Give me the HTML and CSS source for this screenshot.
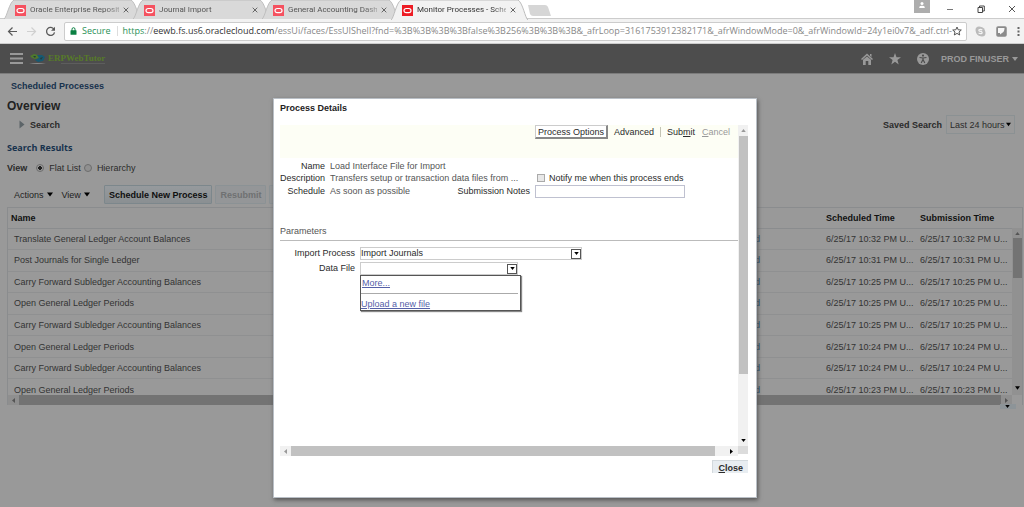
FILE: index.html
```html
<!DOCTYPE html>
<html lang="en">
<head>
<meta charset="utf-8">
<title>Monitor Processes - Scheduled Processes</title>
<link rel="stylesheet" href="styles.css">
</head>
<body>
<svg width="0" height="0" class="defs" aria-hidden="true">
  <symbol id="tabshape" viewBox="0 0 137 20" preserveAspectRatio="none"><path d="M0 20C3 18 5 3 10 0H127C132 3 134 18 137 20" stroke="#bdbdbd"/></symbol>
  <symbol id="oracle" viewBox="0 0 11 11"><rect width="11" height="11"/><rect x="2" y="3.5" width="7" height="4.2" rx="2.1" fill="none" stroke="#fff" stroke-width="1.2"/></symbol>
  <symbol id="cross" viewBox="0 0 6 6"><path d="M.7 .7L5.3 5.3M5.3 .7L.7 5.3" stroke="#666" fill="none"/></symbol>
  <symbol id="tri" viewBox="0 0 6 4"><path d="M0 0H6L3 4Z"/></symbol>
</svg>
<div class="browser">
  <nav class="tabs" aria-label="Tabs">
    <div class="tab"><svg class="shape"><use href="#tabshape"/></svg><svg class="fav"><use href="#oracle"/></svg><span class="tabname">Oracle Enterprise Reposit</span><button class="x" aria-label="Close tab"><svg><use href="#cross"/></svg></button></div>
    <div class="tab"><svg class="shape"><use href="#tabshape"/></svg><svg class="fav"><use href="#oracle"/></svg><span class="tabname">Journal Import</span><button class="x" aria-label="Close tab"><svg><use href="#cross"/></svg></button></div>
    <div class="tab"><svg class="shape"><use href="#tabshape"/></svg><svg class="fav"><use href="#oracle"/></svg><span class="tabname">General Accounting Dash</span><button class="x" aria-label="Close tab"><svg><use href="#cross"/></svg></button></div>
    <div class="tab active"><svg class="shape"><use href="#tabshape"/></svg><svg class="fav"><use href="#oracle"/></svg><span class="tabname">Monitor Processes - Sche</span><button class="x" aria-label="Close tab"><svg><use href="#cross"/></svg></button></div>
    <button class="newtab" aria-label="New tab"><svg width="24" height="11" viewBox="0 0 24 11"><path d="M1 0H18Q20 0 21 2L24 11H6Q4 11 3 9Z" fill="#d6d6d6"/></svg></button>
    <div class="window">
      <button class="user" aria-label="User"><svg width="16" height="13" viewBox="0 0 16 13"><path d="M0 0H16V13H0Z" fill="#adadad"/><circle cx="8" cy="3.6" r="1.5" fill="#fff"/><path d="M5.3 8V7Q5.3 5.7 8 5.7T10.700 7V8Z" fill="#fff"/></svg></button>
      <button aria-label="Minimise"><svg width="8" height="8" viewBox="0 0 8 8"><path d="M1 4.500H7" stroke="#777"/></svg></button>
      <button aria-label="Restore"><svg width="8" height="8" viewBox="0 0 8 8"><path d="M1 2.500H5.500V7.500H1ZM2.500 2V1H7.300V6H6" fill="none" stroke="#444"/></svg></button>
      <button aria-label="Close"><svg width="8" height="8" viewBox="0 0 8 8"><path d="M1 1L7 7M7 1L1 7" stroke="#555"/></svg></button>
    </div>
  </nav>
  <div class="toolbar">
    <button aria-label="Back"><svg width="11" height="11" viewBox="0 0 11 11"><path d="M10 5.500H1.500M5.500 1.500L1.500 5.500L5.500 9.500" fill="none" stroke="#5a5a5a" stroke-width="1.200"/></svg></button>
    <button aria-label="Forward"><svg width="11" height="11" viewBox="0 0 11 11"><path d="M1 5.500H9.500M5.500 1.500L9.500 5.500L5.500 9.500" fill="none" stroke="#d0d0d0" stroke-width="1.200"/></svg></button>
    <button aria-label="Reload"><svg width="11" height="11" viewBox="0 0 11 11"><path d="M9 3.300A4 4 0 1 0 9.500 6.300" fill="none" stroke="#5a5a5a" stroke-width="1.300"/><path d="M10 .8V4.800H6Z" fill="#5a5a5a"/></svg></button>
    <div class="address">
      <svg width="7" height="8" viewBox="0 0 7 8"><rect x=".5" y="3.300" width="6" height="4.400" rx=".5" fill="#0b8043"/><path d="M2 4V2.200A1.500 1.500 0 0 1 5 2.200V4" fill="none" stroke="#0b8043"/></svg>
      <span class="secure">Secure</span>
      <span class="url"><span class="scheme">https</span>://<span class="host">eewb.fs.us6.oraclecloud.com</span>/essUi/faces/EssUIShell?fnd=%3B%3B%3B%3Bfalse%3B256%3B%3B%3B&amp;_afrLoop=3161753912382171&amp;_afrWindowMode=0&amp;_afrWindowId=24y1ei0v7&amp;_adf.ctrl-</span>
      <button aria-label="Bookmark"><svg width="10" height="10" viewBox="0 0 10 10"><path d="M5 1L6.200 3.800L9.300 4L7 6L7.700 9L5 7.400L2.300 9L3 6L.7 4L3.800 3.800Z" fill="none" stroke="#555"/></svg></button>
    </div>
    <div class="extensions">
      <button aria-label="Skype"><svg width="11" height="11" viewBox="0 0 11 11"><circle cx="4" cy="4" r="3.500" fill="#bbb"/><circle cx="7" cy="7" r="3.500" fill="#bbb"/><circle cx="5.500" cy="5.500" r="4.500" fill="#bbb"/><path d="M7.300 3.900Q5.500 2.700 4 3.800Q3.400 5.200 5.500 5.400Q7.700 5.800 7 7.200Q5.500 8.300 3.600 7" fill="none" stroke="#f5f5f5" stroke-width="1.200"/></svg></button>
      <button aria-label="Extension"><svg width="11" height="11" viewBox="0 0 11 11"><rect x="1" y="1" width="9" height="9" rx="1" fill="#8b8b8b" stroke="#8b8b8b" stroke-width="1.500"/><path d="M2 2H8.500Q8.500 6 6 7L4 8.500V7H2Z" fill="#f6f6f6"/></svg></button>
      <button aria-label="Menu"><svg width="3" height="11" viewBox="0 0 3 11"><path d="M.5 1h2v2h-2zM.5 4.500h2v2h-2zM.5 8h2v2h-2z" fill="#666"/></svg></button>
    </div>
  </div>

  <div class="app">
    <header class="appbar">
      <button aria-label="Navigator"><svg width="13" height="11" viewBox="0 0 13 11"><path d="M0 1H13M0 5.500H13M0 10H13" stroke="#999" stroke-width="2"/></svg></button>
      <a class="logo" href="#"><svg width="17" height="12" viewBox="0 0 17 12"><path d="M1 3L5 1L9 2L10 5L6 6L3 5Z" fill="#4f7a2c"/><path d="M8 2L13 2L16 4L14 8L9 9L6 7L10 5Z" fill="#165a73"/><path d="M4 3L7 3L6 5ZM11 5L14 4L12 7Z" fill="#263d3c"/><path d="M0 11Q8 8.800 17 11Z" fill="#8b8b8b"/></svg><span class="brand"><span>ERPWebTutor</span><span class="tagline"></span></span></a>
      <div class="globals">
        <button aria-label="Home"><svg width="12" height="12" viewBox="0 0 12 12"><path d="M0 6L6 .5L12 6L11 7L6 2.500L1 7Z"/><path d="M2 6.800L6 3.500L10 6.800V12H7.300V8H4.700V12H2Z"/><path d="M9 1H10.500V4L9 2.800Z"/></svg></button>
        <button aria-label="Favorites"><svg width="12" height="12" viewBox="0 0 12 12"><path d="M6 0L7.500 4.300H12L8.400 7L9.700 11.500L6 8.800L2.300 11.500L3.600 7L0 4.300H4.500Z"/></svg></button>
        <button aria-label="Accessibility"><svg width="12" height="12" viewBox="0 0 12 12"><circle cx="6" cy="6" r="6"/><circle cx="6" cy="2.600" r="1.100" fill="#4d4d4d"/><path d="M2.500 4.500L6 5L9.500 4.500M6 5V7M6 6.500L4.200 10M6 6.500L7.800 10" stroke="#4d4d4d" stroke-width="1.200" fill="none"/></svg></button>
        <button class="account">PROD FINUSER <svg width="6" height="4"><use href="#tri"/></svg></button>
      </div>
    </header>

    <main class="page">
      <a class="crumb" href="#">Scheduled Processes</a>
      <h1>Overview</h1>
      <div class="searchrow">
        <button class="disclose"><svg width="6" height="9" viewBox="0 0 6 9"><path d="M.5 .5L5.500 4.500L.5 8.500Z" fill="#5c6468"/></svg>Search</button>
        <label class="saved">Saved Search
          <span class="savedbox"><select><option>Last 24 hours</option></select><svg width="5" height="5"><use href="#tri"/></svg></span>
        </label>
      </div>
      <h2>Search Results</h2>
      <div class="viewrow"><b>View</b>
        <label><input type="radio" name="view" checked>Flat List</label>
        <label><input type="radio" name="view">Hierarchy</label>
      </div>
      <div class="actions">
        <button class="menu">Actions <svg width="6" height="5"><use href="#tri"/></svg></button>
        <button class="menu">View <svg width="6" height="5"><use href="#tri"/></svg></button>
        <button class="btn primary">Schedule New Process</button>
        <button class="btn" disabled>Resubmit</button>
        <button class="btn blank" aria-label="Put on Hold" disabled></button>
      </div>
      <div class="grid">
        <div class="rows">
          <table>
            <colgroup><col><col class="c-status"><col class="c-time"><col class="c-time"></colgroup>
            <thead><tr><th>Name</th><th>Status</th><th>Scheduled Time</th><th>Submission Time</th></tr></thead>
            <tbody>
              <tr><td>Translate General Ledger Account Balances</td><td><a href="#">Succeeded</a></td><td>6/25/17 10:32 PM U...</td><td>6/25/17 10:32 PM U...</td></tr>
              <tr><td>Post Journals for Single Ledger</td><td><a href="#">Succeeded</a></td><td>6/25/17 10:31 PM U...</td><td>6/25/17 10:31 PM U...</td></tr>
              <tr><td>Carry Forward Subledger Accounting Balances</td><td><a href="#">Succeeded</a></td><td>6/25/17 10:25 PM U...</td><td>6/25/17 10:25 PM U...</td></tr>
              <tr><td>Open General Ledger Periods</td><td><a href="#">Succeeded</a></td><td>6/25/17 10:25 PM U...</td><td>6/25/17 10:25 PM U...</td></tr>
              <tr><td>Carry Forward Subledger Accounting Balances</td><td><a href="#">Succeeded</a></td><td>6/25/17 10:25 PM U...</td><td>6/25/17 10:25 PM U...</td></tr>
              <tr><td>Open General Ledger Periods</td><td><a href="#">Succeeded</a></td><td>6/25/17 10:24 PM U...</td><td>6/25/17 10:24 PM U...</td></tr>
              <tr><td>Carry Forward Subledger Accounting Balances</td><td><a href="#">Succeeded</a></td><td>6/25/17 10:24 PM U...</td><td>6/25/17 10:24 PM U...</td></tr>
              <tr><td>Open General Ledger Periods</td><td><a href="#">Succeeded</a></td><td>6/25/17 10:23 PM U...</td><td>6/25/17 10:23 PM U...</td></tr>
            </tbody>
          </table>
        </div>
        <div class="vscroll"><svg width="5" height="3" class="up"><use href="#tri"/></svg><span class="thumb"></span><svg width="5" height="4"><use href="#tri"/></svg></div>
        <div class="hscroll"><svg width="3" height="5" viewBox="0 0 3 5"><path d="M3 0V5L0 2.500Z"/></svg><span class="thumb"></span><svg width="3" height="5" viewBox="0 0 3 5"><path d="M0 0V5L3 2.500Z"/></svg></div>
        <button class="more" aria-label="More"><svg width="5" height="3"><use href="#tri"/></svg></button>
      </div>
    </main>
  </div>
</div>

<div class="overlay">
  <section class="dialog" role="dialog" aria-labelledby="dlgtitle">
    <h3 id="dlgtitle">Process Details</h3>
    <div class="panel">
      <div class="body">
        <div class="bar">
          <button class="options">Process Options</button>
          <button>Advanced</button>
          <span class="sep"></span>
          <button>Sub<u>m</u>it</button>
          <button disabled><u>C</u>ancel</button>
        </div>
        <div class="details">
          <span class="key">Name</span><span class="value wide">Load Interface File for Import</span>
          <span class="key">Description</span><span class="value">Transfers setup or transaction data files from ...</span>
          <label class="notify"><input type="checkbox">Notify me when this process ends</label>
          <span class="key">Schedule</span><span class="value">As soon as possible</span>
          <label for="notes">Submission Notes</label><input id="notes" type="text">
        </div>
        <h4>Parameters</h4>
        <div class="params">
          <label for="imp">Import Process</label>
          <div class="combo long"><select id="imp"><option>Import Journals</option></select><span class="arrow"><svg width="5" height="3"><use href="#tri"/></svg></span></div>
          <label for="file">Data File</label>
          <div class="combo"><select id="file"><option></option></select><span class="arrow"><svg width="5" height="3"><use href="#tri"/></svg></span>
            <div class="popup"><a class="moreitem" href="#">More...</a><a class="upload" href="#">Upload a new file</a></div>
          </div>
        </div>
      </div>
      <div class="vscroll"><svg width="5" height="3" class="up"><use href="#tri"/></svg><span class="thumb"></span><svg width="5" height="3"><use href="#tri"/></svg></div>
      <div class="hscroll"><svg width="3" height="5" viewBox="0 0 3 5"><path d="M3 0V5L0 2.500Z" fill="#999"/></svg><span class="thumb"></span><svg width="3" height="5" viewBox="0 0 3 5"><path d="M0 0V5L3 2.500Z"/></svg></div>
      <span class="corner"></span>
    </div>
    <div class="foot"><button><u>C</u>lose</button></div>
  </section>
</div>
</body>
</html>
```
FILE: styles.css
```css
* { box-sizing: border-box; }
body {
  margin: 0;
  background: #999;
  color: #2b2b2b;
  font: 9px/12px "Liberation Sans", Arial, sans-serif;
}
button, input, select { font: inherit; color: inherit; margin: 0; }
button { padding: 0; border: 0; background: none; white-space: nowrap; }
svg { display: block; flex: none; }
.defs { position: absolute; }
a { text-decoration: none; }
h1, h2, h3, h4 { margin: 0; }
.browser { min-height: 100vh; display: flex; flex-direction: column; }

/* Browser tabs */
.tabs {
  display: flex;
  height: 19px;
  padding-left: 4px;
  background: #fff;
  font: 8px/12px Roboto, "Open Sans", sans-serif;
  border-bottom: 1px solid #ccc;
}
.tab {
  position: relative;
  display: flex;
  align-items: center;
  width: 137px;
  height: 20px;
  margin-right: -8px;
  padding: 0 12px 0 11px;
  gap: 4px;
}
.tab .shape { position: absolute; left: 0; top: 0; width: 100%; height: 19px; fill: #d9d9d9; }
.tab.active .shape { fill: #f2f2f2; height: 20px; }
.tab.active { z-index: 1; }
.fav { position: relative; width: 11px; height: 11px; fill: #f5515f; }
.active .fav { fill: #ed1c24; }
.tabname {
  position: relative;
  flex: 1;
  min-width: 0;
  white-space: nowrap;
  color: #555;
  -webkit-mask-image: linear-gradient(to right, #000 84%, transparent 110%);
  mask-image: linear-gradient(to right, #000 84%, transparent 110%);
}
.active .tabname { color: #333; }
.x { position: relative; }
.x svg { width: 6px; height: 6px; }
.newtab { margin: 0 0 0 7px; align-self: center; padding-top: 2px; }
.window { display: flex; margin-left: auto; padding-right: 8px; gap: 23px; align-items: center; }
.window .user { align-self: flex-start; margin-right: -7px; }

/* Address bar */
.toolbar {
  display: flex;
  align-items: center;
  height: 25px;
  padding: 0 4px 0 7px;
  gap: 8px;
  background: #f2f2f2;
  border-bottom: 1px solid #ccc;
}
.address {
  display: flex;
  align-items: center;
  flex: 1;
  min-width: 0;
  height: 19px;
  padding: 0 4px 0 5px;
  gap: 5px;
  background: #fff;
  border: 1px solid #ccc;
  border-radius: 2px;
  font: 9px/16px "Open Sans", "Noto Sans", sans-serif;
}
.secure { color: #2a9157; padding-right: 6px; border-right: 1px solid #ddd; line-height: 10px; }
.url { flex: 1; min-width: 0; white-space: nowrap; color: #888; }
.scheme { color: #2a9157; }
.host { color: #333; }
.extensions { display: flex; align-items: center; gap: 10px; }

/* Application bar */
.app { flex: 1; background: #999; }
.appbar {
  display: flex;
  align-items: center;
  height: 30px;
  padding: 0 6px 0 10px;
  gap: 6px;
  background: #4d4d4d;
  border-bottom: 1px solid #7c7c7c;
  color: #999;
}
.appbar svg { fill: #999; }
.logo { display: flex; gap: 2px; color: #577b29; align-items: center; }
.brand { display: flex; flex-direction: column; font: bold 9px/9px "Liberation Serif", serif; }
.tagline { height: 1px; margin-left: 13px; background: #5d5d5d; }
.globals { display: flex; align-items: center; margin-left: auto; gap: 16px; }
.account { display: flex; align-items: center; gap: 3px; font-weight: bold; margin-left: -4px; }

/* Page under the dialog */
.page { padding: 5px 1px 0 7px; }
.crumb { display: block; padding: 1px 4px; font-weight: bold; color: #17324d; }
h1 { margin-top: 5px; font-size: 12px; line-height: 16px; color: #222; }
.searchrow { display: flex; justify-content: space-between; align-items: center; padding: 1px 8px 0 12px; }
.disclose, .saved { display: flex; align-items: center; gap: 5px; font-weight: bold; }
.saved { gap: 4px; }
.savedbox { display: flex; align-items: center; padding-right: 3px; border: 1px solid #8b9193; font-weight: normal; }
.savedbox select { appearance: none; height: 17px; padding: 0 1px 0 3px; border: 0; background: none; }
h2 { margin-top: 8px; font: bold 9px/12px "Open Sans", sans-serif; color: #17324d; }
.viewrow { display: flex; align-items: center; margin-top: 7px; height: 14px; }
.viewrow label { display: flex; align-items: center; margin-left: 9px; gap: 5px; }
.viewrow label + label { margin-left: 3px; }
.viewrow input {
  appearance: none;
  width: 8px;
  height: 8px;
  border: 1px solid #6d6d6d;
  border-radius: 50%;
  background: #909090;
}
.viewrow input:checked { background: radial-gradient(circle, #222 0 2px, #999 2px); }
.actions { display: flex; align-items: center; margin-top: 10px; padding-left: 7px; gap: 3px; height: 19px; }
.menu { display: flex; align-items: center; gap: 3px; margin-right: 6px; color: #222; }
.menu + .btn { margin-left: 5px; }
.btn { height: 19px; padding: 0 4px; border: 1px solid #8b9295; border-radius: 1px; font-weight: bold; background: #949698; }
.primary { color: #0f0f0f; border-color: #7c878c; background: linear-gradient(#969a9d, #8a8f92); }
.btn:disabled { color: #6f7172; }
.blank { width: 60px; }

.grid {
  display: grid;
  grid-template-columns: minmax(0, 1fr) 10px;
  grid-template-rows: 187px 10px;
  margin-top: 3px;
  border: 1px solid #8a8c8e;
  border-bottom: 0;
  position: relative;
}
.rows { overflow: hidden; }
table { width: 100%; height: 193px; table-layout: fixed; border-collapse: collapse; }
.c-status { width: 111px; }
.c-time { width: 94px; }
th { height: 20px; padding: 0 2px; text-align: left; color: #111; border-bottom: 1px solid #8a8c8e; }
th:first-child { padding-left: 3px; }
td { height: 21px; padding: 0 2px; white-space: nowrap; color: #333; border-bottom: 1px solid #8f9091; }
td:first-child { padding-left: 6px; }
td a { color: #17405f; }
.vscroll { display: flex; flex-direction: column; align-items: center; }
.hscroll { display: flex; align-items: center; }
.grid .vscroll { margin-top: 20px; background: #919191; padding: 4px 0 5px; }
.grid .vscroll .thumb { width: 9px; height: 40px; margin: 3px 0 auto; background: #737373; }
.grid .up { fill: #555; transform: rotate(180deg); }
.grid .hscroll { background: #8f8f8f; padding: 0 4px; gap: 4px; }
.grid .hscroll svg { fill: #555; }
.hscroll .thumb { flex: 1; height: 100%; }
.grid .hscroll .thumb { background: #737373; }
.more { position: absolute; right: 6px; bottom: -4px; width: 16px; height: 5px; padding: 1px 5px; background: #8d9498; }

/* Dialog */
.overlay { position: absolute; inset: 0; display: flex; justify-content: center; padding: 98px 0 9px 6px; }
.dialog {
  display: flex;
  flex-direction: column;
  width: 484px;
  max-width: 100%;
  padding: 3px 8px 24px 6px;
  background: #fff;
  border: 1px solid #b9bfc6;
  box-shadow: 1px 2px 4px #555;
}
h3 { font-size: 9px; line-height: 12px; color: #222; }
.panel { flex: 1; display: grid; grid-template-columns: minmax(0, 1fr) 10px; grid-template-rows: minmax(0, 1fr) 10px; margin-top: 11px; }
.bar {
  display: flex;
  align-items: flex-start;
  justify-content: flex-end;
  gap: 6px;
  height: 33px;
  padding-right: 8px;
  background: #fdfef5;
}
.bar button { height: 14px; }
.bar .options { border: 1px solid #aaa; border-width: 1px 2px 2px 1px; border-color: #ccc #888 #888 #ccc; background: #fff; padding: 0 2px; }
.bar button:disabled { color: #999; margin-left: 1px; }
.sep { width: 1px; height: 10px; margin-top: 2px; background: #c4c4b4; }
.details {
  display: grid;
  grid-template-columns: 45px minmax(0, 1fr) auto 150px;
  grid-template-rows: 12px 12px 14px;
  gap: 0 5px;
  align-items: center;
  padding: 2px 53px 0 0;
  white-space: nowrap;
}
.key { text-align: right; }
.value { color: #555; }
.value.wide { grid-column: 2 / -1; }
.notify { grid-column: 4; display: flex; align-items: center; gap: 4px; padding-left: 2px; }
.notify input { appearance: none; width: 8px; height: 8px; border: 1px solid #aaa; background: #e8e8e8; }
#notes { width: 100%; height: 13px; padding: 0 2px; border: 1px solid #bfc1d0; background: #fff; }
h4 { margin-top: 24px; padding: 3px 0; font-size: 9px; line-height: 12px; font-weight: normal; color: #555; border-bottom: 1px solid #bbb; }
.params { display: grid; grid-template-columns: 75px auto; gap: 2px 5px; padding-top: 6px; text-align: right; }
.combo { position: relative; display: flex; align-items: center; justify-self: start; width: 158px; height: 13px; border: 1px solid #ccc; text-align: left; }
.combo.long { width: 222px; }
.combo select { appearance: none; flex: 1; min-width: 0; height: 11px; padding: 0; border: 0; background: none; line-height: 11px; }
.arrow { display: flex; align-items: center; justify-content: center; width: 10px; height: 10px; border: 1px solid #555; }
.popup {
  position: absolute;
  left: -1px;
  top: 12px;
  width: 161px;
  padding-right: 2px;
  background: #fff;
  border: 1px solid #555;
  box-shadow: 1px 1px 1px #888;
}
.popup a { display: block; text-decoration: underline; color: #5560a8; }
.popup .moreitem { padding: 1px 1px 4px; border-bottom: 1px solid #aaa; }
.popup .upload { padding-top: 4px; }
.panel .vscroll { background: #f1f1f1; padding: 4px 0; }
.panel .up { fill: #999; transform: rotate(180deg); }
.panel .vscroll .thumb { width: 9px; height: 238px; margin: 4px 0 auto; background: #c1c1c1; }
.panel .hscroll { background: #f1f1f1; padding: 0 5px 0 4px; gap: 4px; }
.panel .hscroll .thumb { margin-right: 11px; background: #c1c1c1; }
.corner { background: #dcdcdc; height: 8px; }
.foot { display: flex; justify-content: flex-end; padding-top: 4px; }
.foot button { height: 13px; padding: 2px 5px; overflow: hidden; font-weight: bold; line-height: 11px; background: #e8edf1; border-top: 1px solid #d3d9dd; border-left: 1px solid #d3d9dd; }
```
